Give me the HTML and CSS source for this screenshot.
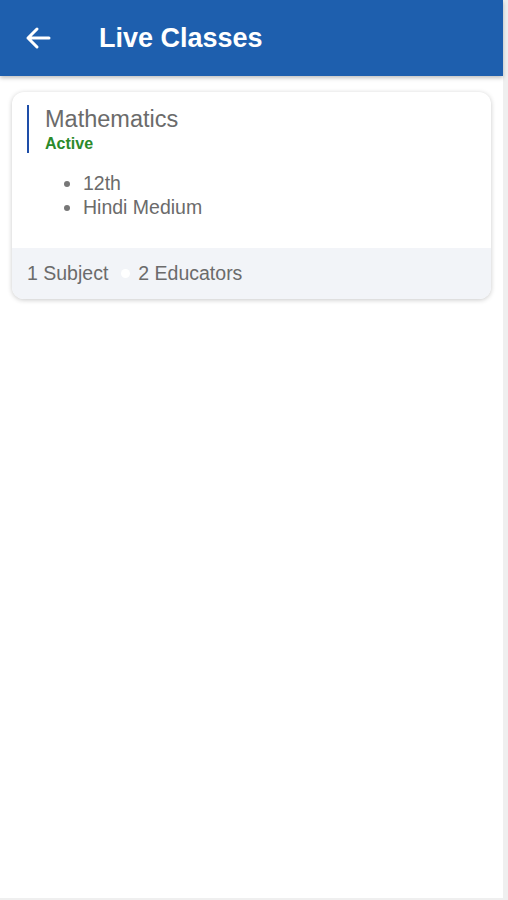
FILE: index.html
```html
<!DOCTYPE html>
<html>
<head>
<meta charset="utf-8">
<link rel="stylesheet" href="styles.css">
</head>
<body>
<div class="page">
  <header class="appbar">
    <svg class="back" width="28" height="24" viewBox="0 0 28 24">
      <path d="M25 12H4M13 3L4 12L13 21" fill="none" stroke="#fff" stroke-width="3" stroke-linecap="round" stroke-linejoin="round"/>
    </svg>
    <h1 class="title">Live Classes</h1>
  </header>
  <main class="content">
    <div class="card">
      <div class="card-body">
        <div class="heading">
          <div class="name">Mathematics</div>
          <div class="status">Active</div>
        </div>
        <ul class="tags">
          <li>12th</li>
          <li>Hindi Medium</li>
        </ul>
      </div>
      <div class="card-foot">
        <span>1 Subject</span>
        <span class="dot"></span>
        <span>2 Educators</span>
      </div>
    </div>
  </main>
</div>
</body>
</html>
```
FILE: styles.css
```css
html, body {
  margin: 0;
  padding: 0;
  background: #efefef;
}
body {
  font-family: "Liberation Sans", Arial, sans-serif;
}
.page {
  width: 503px;
  height: 898px;
  background: #fff;
  display: flex;
  flex-direction: column;
}
.appbar {
  height: 76px;
  background: #1e5fae;
  display: flex;
  align-items: center;
  padding-left: 24px;
  box-shadow: 0 2px 4px rgba(0,0,0,0.25);
  flex-shrink: 0;
}
.back {
  display: block;
  margin-right: 47px;
}
.title {
  margin: 0;
  color: #fff;
  font-size: 27px;
  font-weight: bold;
  line-height: 1;
}
.content {
  padding: 16px 12px;
}
.card {
  border-radius: 12px;
  background: #fff;
  box-shadow: 0 1px 5px rgba(0,0,0,0.22);
  overflow: hidden;
}
.card-body {
  padding: 13px 15px 29px;
}
.heading {
  border-left: 2px solid #1e4ea8;
  padding-left: 16px;
  padding-top: 1px;
}
.name {
  color: #6b6b6b;
  font-size: 23.5px;
  line-height: 27px;
}
.status {
  color: #2b8a2b;
  font-weight: bold;
  font-size: 16px;
  line-height: 19px;
  padding-top: 1px;
}
.tags {
  margin: 18px 0 0;
  padding-left: 56px;
  color: #6b6b6b;
  font-size: 19.5px;
  line-height: 24px;
}
.tags li::marker {
  color: #777;
}
.card-foot {
  background: #f2f4f8;
  height: 51px;
  display: flex;
  align-items: center;
  padding-left: 15px;
  color: #6b6b6b;
  font-size: 19.5px;
}
.dot {
  width: 9px;
  height: 9px;
  border-radius: 50%;
  background: #fff;
  margin: 0 8px 0 13px;
}
```
